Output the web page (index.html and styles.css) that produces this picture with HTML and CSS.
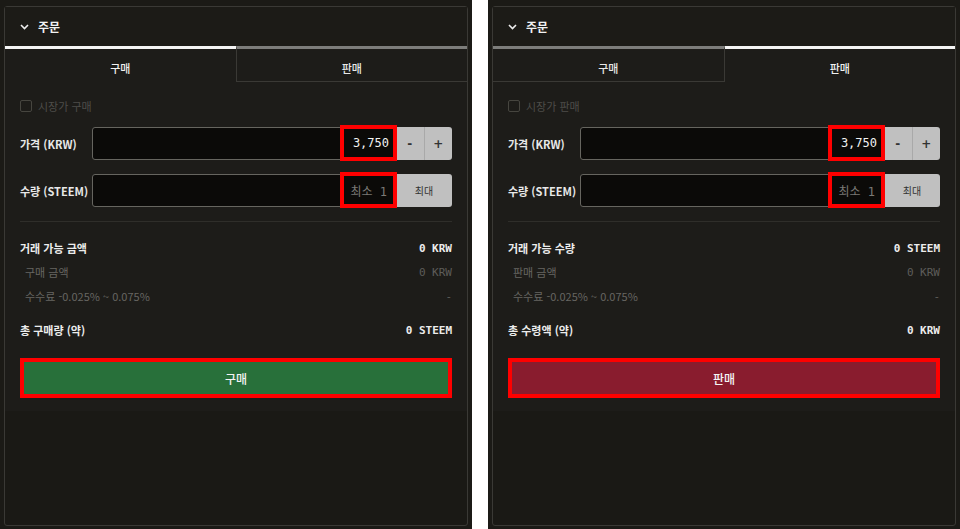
FILE: index.html
```html
<!DOCTYPE html>
<html lang="ko">
<head>
<meta charset="utf-8">
<title>주문</title>
<link rel="stylesheet" href="styles.css">
</head>
<body>
  <div class="shot">
    <div class="panel">
      <div class="head">
        <svg class="chev" width="9" height="6" viewBox="0 0 9 6"><polyline points="1,1 4.5,4.5 8,1" fill="none" stroke="#eeeeee" stroke-width="1.6"/></svg>
        <span>주문</span>
      </div>
      <div class="tabs">
        <div class="tab">구매</div>
        <div class="tab off off-left">판매</div>
      </div>
      <div class="body">
        <div class="check"><span class="box"></span><span>시장가 구매</span></div>
        <div class="frow">
          <div class="flabel">가격 (KRW)</div>
          <div class="input"><div class="hl val">3,750</div></div>
          <div class="btns"><span class="pm">-</span><span class="pm sep">+</span></div>
        </div>
        <div class="frow gap">
          <div class="flabel">수량 (STEEM)</div>
          <div class="input"><div class="hl ph">최소 1</div></div>
          <div class="btns"><span class="max">최대</span></div>
        </div>
        <div class="divider"></div>
        <div class="row main first"><span>거래 가능 금액</span><span class="num">0 KRW</span></div>
        <div class="row sub"><span>구매 금액</span><span class="num">0 KRW</span></div>
        <div class="row sub"><span>수수료 -0.025% ~ 0.075%</span><span class="num">-</span></div>
        <div class="row main total"><span>총 구매량 (약)</span><span class="num">0 STEEM</span></div>
        <div class="action buy">구매</div>
      </div>
    </div>
  </div>
  <div class="shot">
    <div class="panel">
      <div class="head">
        <svg class="chev" width="9" height="6" viewBox="0 0 9 6"><polyline points="1,1 4.5,4.5 8,1" fill="none" stroke="#eeeeee" stroke-width="1.6"/></svg>
        <span>주문</span>
      </div>
      <div class="tabs">
        <div class="tab off off-right">구매</div>
        <div class="tab">판매</div>
      </div>
      <div class="body">
        <div class="check"><span class="box"></span><span>시장가 판매</span></div>
        <div class="frow">
          <div class="flabel">가격 (KRW)</div>
          <div class="input"><div class="hl val">3,750</div></div>
          <div class="btns"><span class="pm">-</span><span class="pm sep">+</span></div>
        </div>
        <div class="frow gap">
          <div class="flabel">수량 (STEEM)</div>
          <div class="input"><div class="hl ph">최소 1</div></div>
          <div class="btns"><span class="max">최대</span></div>
        </div>
        <div class="divider"></div>
        <div class="row main first"><span>거래 가능 수량</span><span class="num">0 STEEM</span></div>
        <div class="row sub"><span>판매 금액</span><span class="num">0 KRW</span></div>
        <div class="row sub"><span>수수료 -0.025% ~ 0.075%</span><span class="num">-</span></div>
        <div class="row main total"><span>총 수령액 (약)</span><span class="num">0 KRW</span></div>
        <div class="action sell">판매</div>
      </div>
    </div>
  </div>
</body>
</html>
```

FILE: styles.css
```css
* { box-sizing: border-box; }
html, body { margin: 0; padding: 0; }
body {
  width: 960px;
  height: 529px;
  background: #ffffff;
  display: flex;
  gap: 16px;
  overflow: hidden;
  font-family: "Noto Sans CJK KR", "Noto Sans", sans-serif;
}
.shot {
  width: 472px;
  height: 529px;
  background: #1b1a16;
  padding: 6px 4px 3px 4px;
  display: flex;
}
.panel {
  flex: 1;
  border: 1px solid #3a3935;
  border-radius: 3px;
  background: #1a1915;
  display: flex;
  flex-direction: column;
}
.head {
  height: 39px;
  display: flex;
  align-items: center;
  gap: 9px;
  padding-left: 15px;
  color: #f2f2f2;
  font-weight: 700;
  font-size: 12px;
  background: #1c1b17;
}
.chev { display: block; }
.tabs { display: flex; height: 36px; background: #1d1c19; }
.tab {
  flex: 1;
  border-top: 3px solid #f4f4f4;
  display: flex;
  align-items: center;
  justify-content: center;
  padding-top: 5px;
  color: #f0f0f0;
  font-size: 11px;
  font-weight: 500;
}
.tab.off { border-top-color: #7d7d7b; border-bottom: 1px solid #3a3935; color: #e8e8e8; }
.tab.off-left { border-left: 1px solid #3a3935; }
.tab.off-right { border-right: 1px solid #3a3935; }
.body {
  background: #1d1c19;
  padding: 18px 15px 13px;
}
.check {
  display: flex;
  align-items: center;
  gap: 6px;
  height: 12px;
  font-size: 11px;
  color: #4e4d49;
}
.box {
  width: 12px;
  height: 12px;
  border: 1px solid #46453f;
  border-radius: 2px;
}
.frow {
  display: flex;
  align-items: stretch;
  height: 33px;
  margin-top: 15px;
}
.frow.gap { margin-top: 14px; }
.flabel {
  width: 72px;
  display: flex;
  align-items: center;
  font-size: 11px;
  font-weight: 700;
  color: #e8e8e8;
}
.input {
  flex: 1;
  display: flex;
  justify-content: flex-end;
  background: #0b0a08;
  border: 1px solid #66655f;
  border-radius: 3px 0 0 3px;
}
.hl {
  width: 57px;
  margin: -3px -2px -2px 0;
  border: 4px solid #ff0000;
  display: flex;
  align-items: center;
  justify-content: flex-end;
  padding-right: 4px;
  font-family: "DejaVu Sans Mono", "Noto Sans CJK KR", monospace;
  font-size: 12px;
  position: relative;
  z-index: 1;
}
.hl.val { color: #f2f2f2; }
.hl.ph { color: #7a7975; padding-right: 6px; }
.btns {
  width: 56px;
  display: flex;
  background: #c0c0c0;
  border-radius: 0 3px 3px 0;
}
.pm {
  flex: 1;
  display: flex;
  align-items: center;
  justify-content: center;
  font-family: "DejaVu Sans", sans-serif;
  font-size: 12px;
  font-weight: 700;
  color: #333333;
}
.pm.sep { border-left: 1px solid #a9a9a9; }
.max {
  flex: 1;
  display: flex;
  align-items: center;
  justify-content: center;
  font-size: 10px;
  color: #333333;
}
.divider {
  height: 1px;
  margin-top: 14px;
  background: #2f2e2a;
}
.row {
  display: flex;
  justify-content: space-between;
  align-items: center;
  height: 24px;
  font-size: 11px;
}
.row.first { margin-top: 14px; }
.row.total { margin-top: 10px; }
.row.main { color: #ececec; font-weight: 700; }
.row.sub { color: #676662; padding-left: 5px; }
.num {
  font-family: "DejaVu Sans Mono", monospace;
  font-size: 11px;
}
.row.sub .num { color: #5e5d59; font-weight: 400; }
.action {
  margin-top: 16px;
  height: 40px;
  border: 4px solid #ff0000;
  display: flex;
  align-items: center;
  justify-content: center;
  color: #f4f4f4;
  font-size: 12px;
  font-weight: 500;
}
.action.buy { background: #28703a; }
.action.sell { background: #891c2e; }
```
